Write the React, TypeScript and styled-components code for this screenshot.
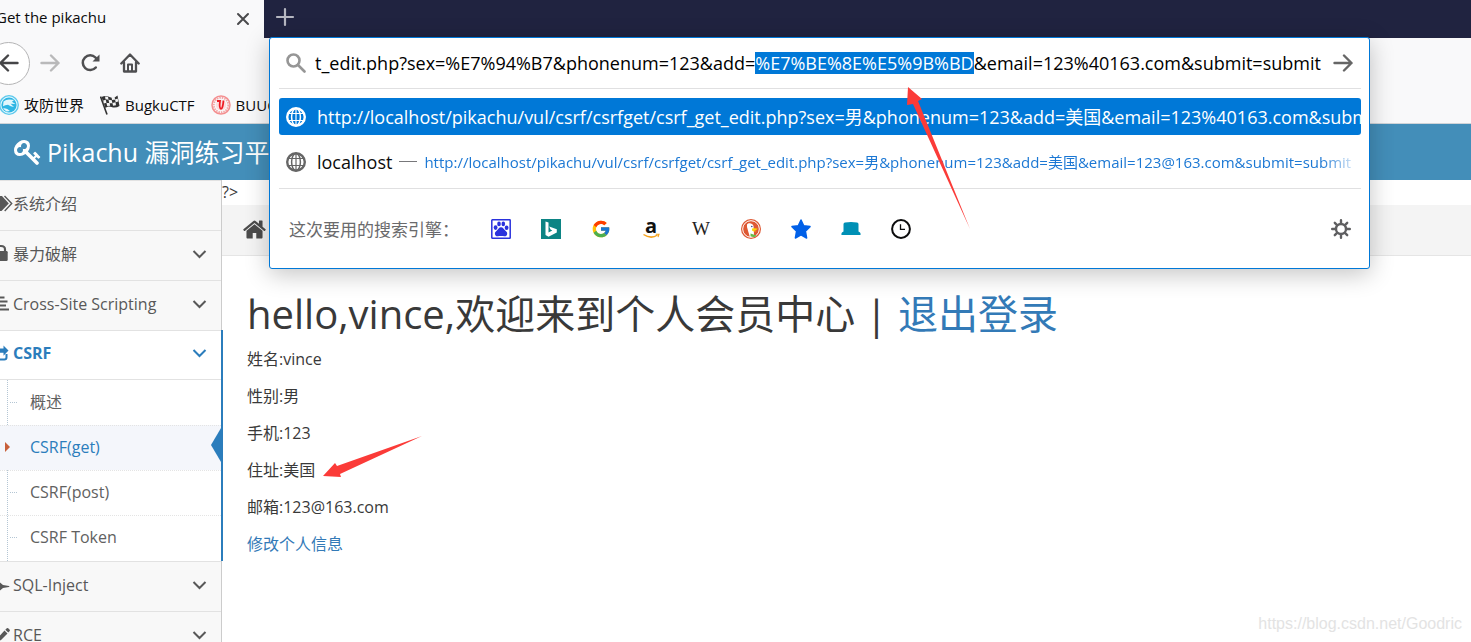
import React, { useLayoutEffect, useRef } from "react";
import styled, { createGlobalStyle, css } from "styled-components";
import { FcGoogle } from "react-icons/fc";

const GlobalStyle = createGlobalStyle`
  * { box-sizing: border-box; }
  body {
    margin: 0;
    background: #fff;
    font-family: "Open Sans", "Noto Sans CJK SC", sans-serif;
    color: #393939;
  }
  button { font: inherit; color: inherit; background: none; border: 0; padding: 0; }
  a { color: inherit; text-decoration: none; }
  ul { list-style: none; margin: 0; padding: 0; }
  svg { display: block; flex: none; }
`;

const Window = styled.div`
  position: relative;
  display: flex;
  flex-direction: column;
  height: 100vh;
  overflow: hidden;
`;

/* ---------- browser chrome ---------- */

const TabStrip = styled.div`
  display: flex;
  height: 38px;
  flex: none;
  background: #202340;
`;

const Tab = styled.div`
  display: flex;
  align-items: center;
  justify-content: space-between;
  width: 264px;
  padding-right: 12px;
  background: #f9f9fa;
  color: #0c0c0d;
  font-size: 15px;
  line-height: 20px;
  overflow: hidden;
`;

const TabTitle = styled.span`
  margin: 0 0 4px -4px;
  white-space: nowrap;
`;

const NewTab = styled.button`
  display: flex;
  align-items: center;
  padding: 0 11px 4px;
`;

const Toolbar = styled.div`
  display: flex;
  align-items: center;
  gap: 20px;
  height: 50px;
  flex: none;
  background: #f9f9fa;
`;

const BackButton = styled.button`
  display: flex;
  align-items: center;
  justify-content: center;
  width: 43px;
  height: 43px;
  margin: 0 -10px 0 -13px;
  border: 1px solid #b4b4b5;
  border-radius: 50%;
  background: #fff;
`;

const ToolButton = styled.button`
  display: flex;
`;

const Bookmarks = styled.nav`
  display: flex;
  align-items: center;
  gap: 16px;
  height: 36px;
  flex: none;
  background: #f9f9fa;
  border-bottom: 1px solid #d0d4d8;
  padding-bottom: 1px;
  color: #0c0c0d;
  font-size: 15px;
  line-height: 20px;
`;

const Bookmark = styled.a`
  display: flex;
  align-items: center;
  gap: 5px;
  white-space: nowrap;
  &:first-child { margin-left: -1px; }
`;

/* ---------- address bar panel ---------- */

const UrlPanel = styled.div`
  position: absolute;
  z-index: 2;
  top: 37px;
  left: 269px;
  right: 101px;
  padding: 0 8px 0 9px;
  border: 1px solid #0078d7;
  border-radius: 3px;
  background: #fff;
  box-shadow: 0 5px 24px rgba(0, 0, 0, 0.24);
`;

const UrlForm = styled.form`
  display: flex;
  align-items: center;
  height: 51px;
  padding: 0 8px 0 7px;
  border-bottom: 1px solid #e0e0e1;
`;

const UrlInput = styled.input`
  flex: 1;
  min-width: 0;
  margin: 0 6px 0 9px;
  padding: 0;
  border: 0;
  outline: 0;
  background: transparent;
  color: #000;
  font-family: inherit;
  font-size: 18px;
  line-height: 22px;
  &::selection { background: #0078d7; color: #fff; }
`;

const Results = styled.ul`
  padding: 9px 0 8px !important;
  border-bottom: 1px solid #e0e0e1;
`;

const Result = styled.li<{ $selected?: boolean }>`
  display: flex;
  align-items: center;
  gap: 11px;
  height: 37px;
  padding-left: 7px;
  border-radius: 3px;
  white-space: nowrap;
  overflow: hidden;
  color: #0c0c0d;
  font-size: 18px;
  line-height: 24px;
  & + & { margin-top: 8px; }
  ${(p) => p.$selected && css`background: #0078d7; color: #fff;`}
`;

const Dash = styled.span`
  flex: none;
  width: 18px;
  height: 1px;
  margin: 0 -4px;
  background: #77777a;
`;

const ResultUrl = styled.a`
  flex: 1;
  min-width: 0;
  overflow: hidden;
  color: #1c78d4;
  font-size: 15px;
  mask-image: linear-gradient(to left, transparent, #000 40px);
`;

const Engines = styled.div`
  display: flex;
  align-items: center;
  height: 79px;
  padding: 0 10px;
  color: #6a6a6c;
  font-size: 17px;
  line-height: 24px;
`;

const EngineLabel = styled.span`
  width: 202px;
  padding-top: 2px;
  white-space: nowrap;
`;

const EngineList = styled.div`
  display: flex;
  flex: 1;
  gap: 30px;
`;

const Pointer = styled.svg<{ $left: number; $top: number }>`
  position: absolute;
  left: ${(p) => p.$left}px;
  top: ${(p) => p.$top}px;
  fill: #fb3b38;
  pointer-events: none;
`;

/* ---------- page ---------- */

const PageHeader = styled.header`
  display: flex;
  align-items: center;
  gap: 5px;
  height: 56px;
  flex: none;
  padding-left: 14px;
  background: #438eb9;
  color: #fff;
  font-size: 25px;
  line-height: 32px;
  white-space: nowrap;
`;

const Columns = styled.div`
  display: grid;
  grid-template-columns: 222px 1fr;
  flex: 1;
  min-height: 0;
`;

const Sidebar = styled.nav`
  border-right: 1px solid #ccc;
  background: #f2f2f2;
  font-size: 16px;
  line-height: 24px;
`;

const Group = styled.li<{ $open?: boolean }>`
  position: relative;
  ${(p) => p.$open && css`
    background: #fff;
    &::after {
      content: "";
      position: absolute;
      top: 0;
      right: -2px;
      width: 2px;
      height: 100%;
      background: #2b7dbc;
    }
  `}
`;

const GroupLink = styled.a<{ $open?: boolean }>`
  display: flex;
  align-items: center;
  height: ${(p) => (p.$open ? 49 : 50)}px;
  padding: 0 14px 4px 0;
  border-top: 1px solid #e2e2e2;
  background: ${(p) => (p.$open ? "#fff" : "#f8f8f8")};
  color: ${(p) => (p.$open ? "#2b7dbc" : "#585858")};
  font-weight: ${(p) => (p.$open ? 700 : 400)};
`;

const GroupName = styled.span`
  flex: 1;
`;

const SubList = styled.ul`
  position: relative;
  padding-bottom: 1px !important;
  border-top: 1px solid #e2e2e2;
  &::before {
    content: "";
    position: absolute;
    top: 0;
    bottom: 0;
    left: 7px;
    border-left: 1px dotted #b4c6d4;
  }
  li:first-child a { border-top-color: transparent; }
`;

const SubItem = styled.a<{ $active?: boolean }>`
  position: relative;
  display: flex;
  align-items: center;
  height: 45px;
  padding: 0 0 2px 30px;
  border-top: 1px dotted #e4e4e4;
  color: ${(p) => (p.$active ? "#2b7dbc" : "#616161")};
  background: ${(p) => (p.$active ? "#f4f6fb" : "transparent")};
  &::before {
    content: "";
    position: absolute;
    left: 10px;
    top: 21px;
    width: 7px;
    border-top: 1px dotted #b4c6d4;
  }
  ${(p) => p.$active && css`
    &::before {
      left: 5px;
      top: 16px;
      width: 0;
      border: solid transparent;
      border-width: 5px 0 5px 5px;
      border-left-color: #c8603a;
    }
    &::after {
      content: "";
      position: absolute;
      right: 0;
      top: 2px;
      border: solid transparent;
      border-width: 17px 10px 17px 0;
      border-right-color: #2b7dbc;
    }
  `}
`;

const Main = styled.main`
  min-width: 0;
  font-size: 16px;
  line-height: 24px;
`;

const StrayText = styled.div`
  height: 25px;
`;

const Breadcrumb = styled.div`
  display: flex;
  align-items: center;
  height: 51px;
  padding: 0 0 2px 20px;
  border-bottom: 1px solid #e5e5e5;
  background: #f4f4f4;
  color: #4c4c4c;
`;

const Profile = styled.section`
  padding: 31px 25px;
`;

const Title = styled.h1`
  margin: 0 0 6px;
  font-size: 40px;
  line-height: 54px;
  font-weight: 400;
`;

const Link = styled.a`
  color: #337ab7;
`;

const Field = styled.p`
  position: relative;
  margin: 0 0 13px;
`;

const Watermark = styled.div`
  position: absolute;
  right: 9px;
  bottom: 8px;
  color: #e3e3e3;
  font-family: "Liberation Sans", sans-serif;
  font-size: 16px;
  line-height: 20px;
`;

/* ---------- icons ---------- */

const ArrowIcon = ({ color, flip }: { color: string; flip?: boolean }) => (
  <svg width="20" height="20" viewBox="0 0 20 20" fill="none" stroke={color} strokeWidth="2.4" strokeLinecap="round" strokeLinejoin="round">
    {flip ? <path d="M18.5 10H1.5M9 2.5 1.5 10 9 17.5" /> : <path d="M1.5 10h17M11 2.500 18.500 10 11 17.500" />}
  </svg>
);

const GlobeIcon = ({ color }: { color: string }) => (
  <svg width="20" height="20" viewBox="0 0 20 20" fill="none" stroke={color}>
    <circle cx="10" cy="10" r="8.8" strokeWidth="2.4" />
    <ellipse cx="10" cy="10" rx="4.400" ry="8.600" strokeWidth="1.500" />
    <path d="M10 1v18M2.500 6.500h15M2.500 13.500h15" strokeWidth="1.200" />
  </svg>
);

const Chevron = () => (
  <svg width="16" height="16" viewBox="0 0 16 16" fill="none" stroke="currentColor" strokeWidth="2">
    <path d="M2.500 5l6 6 6-6" />
  </svg>
);

const CogIcon = () => (
  <svg width="20" height="20" viewBox="0 0 20 20" fill="none" stroke="#5f5f61" strokeWidth="2.400" strokeLinecap="round">
    <circle cx="10" cy="10" r="5" />
    <path d="M10 1.200v3M10 15.800v3M1.200 10h3M15.800 10h3M3.800 3.800l2 2M14.200 14.200l2 2M3.800 16.200l2-2M14.200 5.800l2-2" />
  </svg>
);

const KeyIcon = () => (
  <svg width="28" height="28" viewBox="0 0 1792 1792" fill="#fff">
    <path d="M832 512q0-80-56-136t-136-56-136 56-56 136q0 42 19 83-41-19-83-19-80 0-136 56t-56 136 56 136 136 56 136-56 56-136q0-42-19-83 41 19 83 19 80 0 136-56t56-136zm851 704q0 17-49 66t-66 49q-9 0-28.500-16t-36.500-33-38.500-40-24.500-26l-96 96 220 220q28 28 28 68 0 42-39 81t-81 39q-40 0-68-28l-671-671q-176 131-365 131-163 0-265.500-102.500t-102.500-265.500q0-160 95-313t248-248 313-95q163 0 265.500 102.500t102.500 265.500q0 189-131 365l355 355 96-96q-3-3-26-24.500t-40-38.500-33-36.500-16-28.500q0-17 49-66t66-49q13 0 23 10 6 6 46 44.500t82 79.500 86.500 86 73 78 28.500 41z" />
  </svg>
);

const HomeSolidIcon = () => (
  <svg width="25" height="25" viewBox="0 0 1792 1792" fill="currentColor">
    <path d="M1472 992v480q0 26-19 45t-45 19h-384v-384h-256v384h-384q-26 0-45-19t-19-45v-480q0-1 .5-3t.5-3l575-474 575 474q1 2 1 6zm223-69l-62 74q-8 9-21 11h-3q-13 0-21-7l-692-577-692 577q-12 8-24 7-13-2-21-11l-62-74q-8-10-7-23.500t11-21.500l719-599q32-26 76-26t76 26l244 204v-195q0-14 9-23t23-9h192q14 0 23 9t9 23v408l219 182q10 8 11 21.500t-7 23.500z" />
  </svg>
);

const menuShapes: Record<string, React.ReactNode> = {
  tags: (
    <>
      <path d="M0 2h2l6.800 7.500L1.500 17H0z" />
      <path d="M4.500 2l7.200 7.500-7 7.500" fill="none" stroke="currentColor" strokeWidth="1.400" />
    </>
  ),
  lock: (
    <>
      <path d="M-4 7h10.500q1.200 0 1.200 1.200v7.600q0 1.200-1.200 1.200H-4z" />
      <path d="M5 8V5.500Q5 2 1 2H-1" fill="none" stroke="currentColor" strokeWidth="2.200" />
    </>
  ),
  bars: <path d="M0 2.500h4.500v2H0zM0 6.500h7.500v2H0zM0 10.500h6v2H0zM0 14.500h9v2H0z" />,
  share: (
    <>
      <path d="M8.500 7.500 3.500 2.500v3H0v4.200h3.500v3z" />
      <path d="M6.500 11v3.200q0 2.200-2.200 2.200H-2" fill="none" stroke="currentColor" strokeWidth="2" />
    </>
  ),
  jet: <path d="M0 7.500 3 10l6 1q1 .5 0 1l-6 1-3 2.500z" />,
  pencil: <path d="M0 10.500 4.500 5.500l3 3L1 15l-1 .5zM5.300 4.700l1.500-1.500q.8-.5 1.400.1l1.500 1.500q.5.700 0 1.300L8.300 7.600z" />,
};

const MenuIcon = ({ name }: { name: string }) => (
  <svg width="13" height="20" viewBox="0 0 13 20" fill="currentColor">
    {menuShapes[name]}
  </svg>
);

const BaiduIcon = () => (
  <svg width="20" height="20" viewBox="0 0 20 20">
    <rect x=".8" y=".8" width="18.400" height="18.400" rx=".5" fill="#fff" stroke="#2a32dd" strokeWidth="1.500" />
    <g fill="#2a32dd">
      <ellipse cx="4.600" cy="8.600" rx="1.900" ry="2.300" />
      <ellipse cx="8" cy="4.900" rx="1.800" ry="2.400" />
      <ellipse cx="12.300" cy="4.900" rx="1.800" ry="2.400" />
      <ellipse cx="15.600" cy="8.800" rx="1.900" ry="2.300" />
      <path d="M10 8.300c2.100 0 2.900 2 4.200 3.200 1.600 1.200 2.300 2.300 1.900 4-.5 1.900-2.400 2-3.900 1.600q-2.100-.4-4.300 0c-1.500.400-3.400.200-3.900-1.600-.4-1.700.3-2.800 1.900-4C7.200 10.300 7.900 8.300 10 8.300z" />
    </g>
  </svg>
);

const BingIcon = () => (
  <svg width="20" height="20" viewBox="0 0 20 20">
    <path fill="#0c8484" d="M0 0h20v20H0z" />
    <path fill="#fff" d="M4.500 2.500l3 1v10l3.800-2-1.800-.9-1.300-3.100 7.600 2.800v3.200l-8.300 4.300-3-1.800z" />
  </svg>
);

const AmazonIcon = () => (
  <svg width="20" height="20" viewBox="0 0 20 20">
    <text x="10" y="14" textAnchor="middle" fontFamily="Open Sans, sans-serif" fontWeight="700" fontSize="20" fill="#111">a</text>
    <path d="M2.500 15.500Q10 20.500 16.500 16" fill="none" stroke="#f6a21b" strokeWidth="1.500" />
    <path d="M14.800 15.200h3.200l-1 3" fill="none" stroke="#f6a21b" strokeWidth="1.100" />
  </svg>
);

const WikipediaIcon = () => (
  <svg width="20" height="20" viewBox="0 0 20 20">
    <text x="10" y="16" textAnchor="middle" fontFamily="Liberation Serif, serif" fontSize="19" fill="#222">W</text>
  </svg>
);

const DuckIcon = () => (
  <svg width="20" height="20" viewBox="0 0 20 20">
    <circle cx="10" cy="10" r="10" fill="#de5833" />
    <circle cx="10" cy="10" r="8.300" fill="none" stroke="#fff" strokeWidth="1" />
    <path d="M6 5.500C7 3.500 11.500 3.500 12.500 7l.3 4 .2 6.500q-2 .8-4.200.2Q7 12 6 8z" fill="#fff" />
    <path d="M11 9.500q3-.8 6 .2-2 1.500-4 1.500l3 .8q-3 1.200-5-.5z" fill="#fdd20a" />
    <path d="M9.500 14.500l6 2-1.500 1.300q-2.500.5-4.500-.5z" fill="#65bc46" />
    <circle cx="10.800" cy="7.500" r=".8" fill="#2d4f8e" />
  </svg>
);

const StarIcon = () => (
  <svg width="20" height="20" viewBox="0 0 20 20" fill="#0060e8" stroke="#0060e8" strokeWidth="1.500" strokeLinejoin="round">
    <path d="M10 1l2.700 5.800 6.300.8-4.600 4.500 1.200 6.900L10 15.900 4.400 19l1.200-6.900L1 7.600l6.300-.8z" />
  </svg>
);

const HatIcon = () => (
  <svg width="20" height="20" viewBox="0 0 20 20" fill="#0090b5">
    <path d="M4 3.500q6-1 12 0 1.500.3 1.500 1.800v7.200q2 .8 2.200 2.500.2.900-.8.900H1.100q-1 0-.8-.9.200-1.700 2.200-2.500V5.300q0-1.500 1.500-1.800z" />
  </svg>
);

const ClockIcon = () => (
  <svg width="20" height="20" viewBox="0 0 20 20" fill="none" stroke="#0c0c0d">
    <circle cx="10" cy="10" r="8.900" strokeWidth="2" />
    <path d="M9.500 5.200v5.100H14" strokeWidth="1.300" />
  </svg>
);

const engines: [string, React.ReactNode][] = [
  ["Baidu", <BaiduIcon />],
  ["Bing", <BingIcon />],
  ["Google", <FcGoogle size={20} />],
  ["Amazon", <AmazonIcon />],
  ["Wikipedia", <WikipediaIcon />],
  ["DuckDuckGo", <DuckIcon />],
  ["Bookmarks", <StarIcon />],
  ["Tabs", <HatIcon />],
  ["History", <ClockIcon />],
];

/* ---------- sections ---------- */

const URL_TEXT = "t_edit.php?sex=%E7%94%B7&phonenum=123&add=%E7%BE%8E%E5%9B%BD&email=123%40163.com&submit=submit";
const SELECTED = "%E7%BE%8E%E5%9B%BD";

function AddressPanel() {
  const input = useRef<HTMLInputElement>(null);
  useLayoutEffect(() => {
    const start = URL_TEXT.indexOf(SELECTED);
    input.current?.focus();
    input.current?.setSelectionRange(start, start + SELECTED.length);
  }, []);
  return (
    <UrlPanel>
      <UrlForm onSubmit={(e) => e.preventDefault()}>
        <svg width="20" height="20" viewBox="0 0 20 20" fill="none" stroke="#969696" strokeWidth="2.600" strokeLinecap="round">
          <circle cx="7.500" cy="7.500" r="6" />
          <path d="M12 12l6.500 6.500" />
        </svg>
        <UrlInput ref={input} aria-label="Address" defaultValue={URL_TEXT} spellCheck={false} />
        <ToolButton aria-label="Go"><ArrowIcon color="#666" /></ToolButton>
      </UrlForm>
      <Results>
        <Result $selected>
          <GlobeIcon color="#fff" />
          <a href="#visit">http://localhost/pikachu/vul/csrf/csrfget/csrf_get_edit.php?sex=男&amp;phonenum=123&amp;add=美国&amp;email=123%40163.com&amp;submit=submit</a>
        </Result>
        <Result>
          <GlobeIcon color="#666" />
          <span>localhost</span>
          <Dash />
          <ResultUrl href="#history">http://localhost/pikachu/vul/csrf/csrfget/csrf_get_edit.php?sex=男&amp;phonenum=123&amp;add=美国&amp;email=123@163.com&amp;submit=submit</ResultUrl>
        </Result>
      </Results>
      <Engines>
        <EngineLabel>这次要用的搜索引擎：</EngineLabel>
        <EngineList>
          {engines.map(([name, icon]) => (
            <ToolButton key={name} aria-label={name}>{icon}</ToolButton>
          ))}
        </EngineList>
        <ToolButton aria-label="Search settings"><CogIcon /></ToolButton>
      </Engines>
      <Pointer $left={636} $top={48} width="66" height="146" viewBox="0 0 66 146">
        <path d="M2 1 1 19l6-1 57 125L12 15l4-2z" />
      </Pointer>
    </UrlPanel>
  );
}

const menu = [
  { name: "系统介绍", icon: "tags", leaf: true },
  { name: "暴力破解", icon: "lock" },
  { name: "Cross-Site Scripting", icon: "bars" },
  { name: "CSRF", icon: "share", items: ["概述", "CSRF(get)", "CSRF(post)", "CSRF Token"] },
  { name: "SQL-Inject", icon: "jet" },
  { name: "RCE", icon: "pencil" },
];

export default function App() {
  return (
    <Window>
      <GlobalStyle />
      <TabStrip>
        <Tab>
          <TabTitle>Get the pikachu</TabTitle>
          <ToolButton aria-label="Close tab">
            <svg width="18" height="18" viewBox="0 0 18 18" stroke="#4a4a4c" strokeWidth="2" strokeLinecap="round">
              <path d="M4 4l10 10M14 4 4 14" />
            </svg>
          </ToolButton>
        </Tab>
        <NewTab aria-label="New tab">
          <svg width="20" height="20" viewBox="0 0 20 20" stroke="#b5b6c0" strokeWidth="2.200" strokeLinecap="round">
            <path d="M10 2v16M2 10h16" />
          </svg>
        </NewTab>
      </TabStrip>
      <Toolbar>
        <BackButton aria-label="Back"><ArrowIcon color="#454547" flip /></BackButton>
        <ToolButton aria-label="Forward" disabled><ArrowIcon color="#b9b9ba" /></ToolButton>
        <ToolButton aria-label="Reload">
          <svg width="20" height="20" viewBox="0 0 20 20" fill="none" stroke="#4f4f51" strokeWidth="2.500" strokeLinecap="round">
            <path d="M15.800 14.500A7.400 7.400 0 1 1 15.500 4.500L17 6.500" />
            <path d="M19.500 1.500v7h-7z" fill="#4f4f51" stroke="none" />
          </svg>
        </ToolButton>
        <ToolButton aria-label="Home">
          <svg width="20" height="20" viewBox="0 0 20 20" fill="none" stroke="#4f4f51" strokeWidth="2.300" strokeLinecap="round" strokeLinejoin="round">
            <path d="M1.300 10.500 10 1.500l8.700 9M4 9.500v9h12v-9" />
            <path d="M8 18v-6.500h4V18" strokeWidth="2" />
          </svg>
        </ToolButton>
      </Toolbar>
      <Bookmarks>
        <Bookmark href="#adworld">
          <svg width="20" height="20" viewBox="0 0 20 20" fill="none">
            <circle cx="10" cy="10" r="9.300" fill="#e2f7fd" stroke="#5cc8ec" strokeWidth="1.300" />
            <circle cx="10" cy="10" r="7.600" fill="#2fb6e4" />
            <path d="M4.500 6.500q3-2.500 6.500-2l4 .5-2 1.700 3.500 2.300-5-.3 3.500 3.300q-3.500-.2-6-2.200-3 0-5 1.500zM4 13.500q3.500-1 7 2.500l-3.500.5z" fill="#e2f7fd" />
          </svg>
          攻防世界
        </Bookmark>
        <Bookmark href="#bugku">
          <svg width="20" height="20" viewBox="0 0 20 20">
            <path d="M.5 1.500 7 19.500" stroke="#333" strokeWidth="1.600" />
            <path d="M1.500 2q4-2 8 0t8-1.500l2 10.500q-4 2.500-8 1t-6 1z" fill="#333" />
            <path d="M5 1.500l3 .2.500 3-3-.4zM11.500 2.200l3-.7.600 3-3 .6zM3.200 5.500l2.500-.8.800 3-2.500.7zM8.500 4.800l3.300.4.600 3-3.200-.3zM15 4.500l2.700-1 .5 3-2.500.8zM6.500 8l3-.2.700 3-3 .3zM12.500 8l3-.7.500 3-3 .5z" fill="#f4f4f4" />
          </svg>
          BugkuCTF
        </Bookmark>
        <Bookmark href="#buu">
          <svg width="20" height="20" viewBox="0 0 20 20" fill="none">
            <circle cx="10" cy="10" r="9" stroke="#f48f90" strokeWidth="1.500" />
            <circle cx="10" cy="10" r="7.300" stroke="#f3a4a4" strokeWidth="2" strokeDasharray="1.500 1" />
            <circle cx="10" cy="10" r="5.300" fill="#fcdede" />
            <path d="M6 6h3q-1 7.500 1 7.800 1.800.200 2.500-8.300" stroke="#ee1c25" strokeWidth="1.800" />
          </svg>
          BUUCTF
        </Bookmark>
      </Bookmarks>
      <AddressPanel />
      <PageHeader>
        <KeyIcon />
        Pikachu 漏洞练习平台
      </PageHeader>
      <Columns>
        <Sidebar>
          <ul>
            {menu.map((group) => (
              <Group key={group.name} $open={!!group.items}>
                <GroupLink href="#menu" $open={!!group.items}>
                  <MenuIcon name={group.icon} />
                  <GroupName>{group.name}</GroupName>
                  {!group.leaf && <Chevron />}
                </GroupLink>
                {group.items && (
                  <SubList>
                    {group.items.map((item) => (
                      <li key={item}>
                        <SubItem href="#item" $active={item === "CSRF(get)"}>{item}</SubItem>
                      </li>
                    ))}
                  </SubList>
                )}
              </Group>
            ))}
          </ul>
        </Sidebar>
        <Main>
          <StrayText>?&gt;</StrayText>
          <Breadcrumb><HomeSolidIcon /></Breadcrumb>
          <Profile>
            <Title>hello,vince,欢迎来到个人会员中心 | <Link href="#logout">退出登录</Link></Title>
            <Field>姓名:vince</Field>
            <Field>性别:男</Field>
            <Field>手机:123</Field>
            <Field>
              住址:美国
              <Pointer $left={75} $top={-23} width="102" height="44" viewBox="0 0 102 44">
                <path d="M1 41 13 28l2 3L100 1 18 39l1 3z" />
              </Pointer>
            </Field>
            <Field>邮箱:123@163.com</Field>
            <Field><Link href="#edit">修改个人信息</Link></Field>
          </Profile>
        </Main>
      </Columns>
      <Watermark>https://blog.csdn.net/Goodric</Watermark>
    </Window>
  );
}
